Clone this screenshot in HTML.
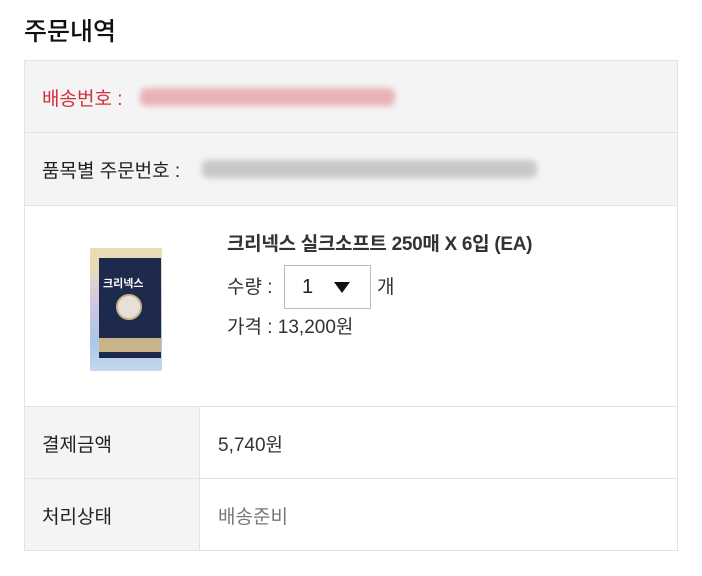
<!DOCTYPE html>
<html><head><meta charset="utf-8"><style>
*{margin:0;padding:0;box-sizing:border-box}
body{width:702px;height:576px;background:#fff;font-family:"Liberation Sans","Noto Sans CJK KR",sans-serif;color:#222;position:relative;overflow:hidden}
.a{position:absolute}
h1{position:absolute;left:24px;top:12px;font-size:25px;font-weight:500;color:#111}
.blur{position:absolute;height:18px;border-radius:6px;filter:blur(3px)}
.h{position:absolute;left:24px;width:654px;height:1px;background:#e3e3e3}
.v{position:absolute;top:60px;width:1px;height:491px;background:#e3e3e3}
</style></head><body>
<h1>주문내역</h1>
<div class="a" style="left:24px;top:60px;width:654px;height:145px;background:#f4f4f4"></div>
<div class="a" style="left:24px;top:406px;width:176px;height:145px;background:#f4f4f4"></div>
<div class="h" style="top:60px"></div>
<div class="h" style="top:132px"></div>
<div class="h" style="top:205px"></div>
<div class="h" style="top:406px"></div>
<div class="h" style="top:478px"></div>
<div class="h" style="top:550px"></div>
<div class="v" style="left:24px"></div>
<div class="v" style="left:677px"></div>
<div class="a" style="left:199px;top:406px;width:1px;height:145px;background:#e3e3e3"></div>
<div class="a" style="left:42px;top:84px;font-size:19px;color:#d0303a">배송번호 :</div>
<div class="blur" style="left:140px;top:88px;width:255px;background:#e9b3b6"></div>
<div class="a" style="left:42px;top:156px;font-size:19px;color:#222">품목별 주문번호 :</div>
<div class="blur" style="left:202px;top:160px;width:335px;background:#c8c8c8"></div>
<div class="a" style="left:90px;top:248px;width:72px;height:123px;background:linear-gradient(#e8dcb5 0 15%,#d8c8e0 40%,#a9c6e8 75%,#c5d8ee);border-radius:2px"></div>
<div class="a" style="left:99px;top:258px;width:62px;height:100px;background:#1d2a4d"></div>
<div class="a" style="left:103px;top:275px;font-size:11px;font-weight:bold;color:#fff">크리넥스</div>
<div class="a" style="left:116px;top:294px;width:26px;height:26px;border-radius:50%;background:#e8e0d8;border:2px solid #c9b48a"></div>
<div class="a" style="left:99px;top:338px;width:62px;height:14px;background:#c9b48a"></div>
<div class="a" style="left:227px;top:229px;font-size:19px;font-weight:bold;color:#333;letter-spacing:-0.3px">크리넥스 실크소프트 250매 X 6입 (EA)</div>
<div class="a" style="left:227px;top:272px;font-size:19px;color:#333">수량 :</div>
<div class="a" style="left:284px;top:265px;width:87px;height:44px;border:1px solid #bbb;background:#fff"></div>
<div class="a" style="left:302px;top:276px;font-size:20px;color:#222">1</div>
<div class="a" style="left:334px;top:282px;width:0;height:0;border-left:8px solid transparent;border-right:8px solid transparent;border-top:11px solid #111"></div>
<div class="a" style="left:377px;top:272px;font-size:19px;color:#333">개</div>
<div class="a" style="left:227px;top:312px;font-size:19px;color:#333">가격 : 13,200원</div>
<div class="a" style="left:42px;top:430px;font-size:19px;color:#222">결제금액</div>
<div class="a" style="left:218px;top:430px;font-size:19px;color:#333">5,740원</div>
<div class="a" style="left:42px;top:502px;font-size:19px;color:#222">처리상태</div>
<div class="a" style="left:218px;top:502px;font-size:19px;color:#777">배송준비</div>
</body></html>
